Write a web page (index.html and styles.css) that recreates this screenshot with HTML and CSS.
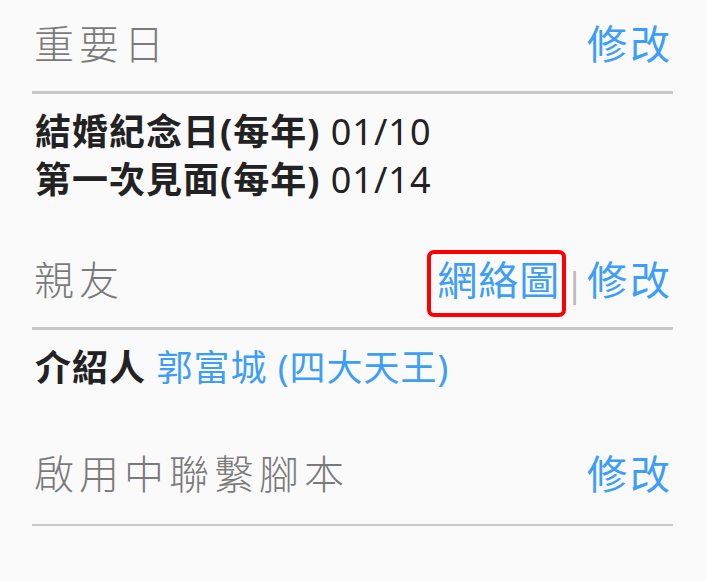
FILE: index.html
```html
<!DOCTYPE html>
<html lang="zh-Hant">

<head>
  <meta charset="UTF-8">
  <meta name="viewport" content="width=device-width, initial-scale=1.0">
  <title>聯絡人資料</title>
  <link rel="stylesheet" href="styles.css">
</head>

<body>
  <div id="panel">
    <section class="section">
      <div class="section-head">
        <h2 class="section-title">重要日</h2>
        <div class="actions">
          <a class="action" href="#">修改</a>
        </div>
      </div>
      <div class="section-body">
        <p><span class="label">結婚紀念日(每年)</span> 01/10</p>
        <p><span class="label">第一次見面(每年)</span> 01/14</p>
      </div>
    </section>
    <section class="section">
      <div class="section-head">
        <h2 class="section-title">親友</h2>
        <div class="actions">
          <a class="action action-marked" href="#">網絡圖</a>
          <span class="action-sep">|</span>
          <a class="action" href="#">修改</a>
        </div>
      </div>
      <div class="section-body">
        <p><span class="label">介紹人</span> <a class="person-link" href="#">郭富城 (四大天王)</a></p>
      </div>
    </section>
    <section class="section section-last">
      <div class="section-head">
        <h2 class="section-title">啟用中聯繫腳本</h2>
        <div class="actions">
          <a class="action" href="#">修改</a>
        </div>
      </div>
    </section>
  </div>
</body>

</html>
```

FILE: styles.css
```css
body {
  margin: 0;
  background-color: #fafafa;
  font-family: "Noto Sans", "Noto Sans CJK TC", sans-serif;
}

#panel {
  padding: 0 33px 0 32px;
}

.section-head {
  display: flex;
  justify-content: space-between;
  align-items: center;
  padding: 18px 0 21px;
  border-bottom: 3px solid #c8c8c8;
}

.section-last .section-head {
  padding: 24px 0 24px;
  border-bottom-width: 2px;
}

.section-title {
  margin: 0;
  padding-left: 2px;
  font-size: 40px;
  font-weight: 300;
  line-height: 52px;
  letter-spacing: 5px;
  color: #7a7a7a;
}

.actions {
  display: flex;
  align-items: center;
  gap: 3px;
}

.action {
  font-size: 40px;
  line-height: 52px;
  letter-spacing: 3px;
  color: #3d9ef7;
  text-decoration: none;
}

/* red marker drawn round the link, does not move the layout */
.action-marked {
  margin: 0 0 -7px;
  padding: 0 2px 7px 6px;
  letter-spacing: 1px;
  border-radius: 3px;
  outline: 4px solid #ff0000;
}

.action-sep {
  padding-top: 8px;
  font-size: 34px;
  line-height: 44px;
  color: #b8b8b8;
}

.section-body {
  padding: 14px 0 32px 3px;
  font-size: 36px;
  line-height: 48px;
  letter-spacing: 1px;
  color: #222222;
}

.section-body p {
  margin: 0;
}

.label {
  font-weight: 700;
}

.person-link {
  color: #3d9ef7;
  text-decoration: none;
}
```
